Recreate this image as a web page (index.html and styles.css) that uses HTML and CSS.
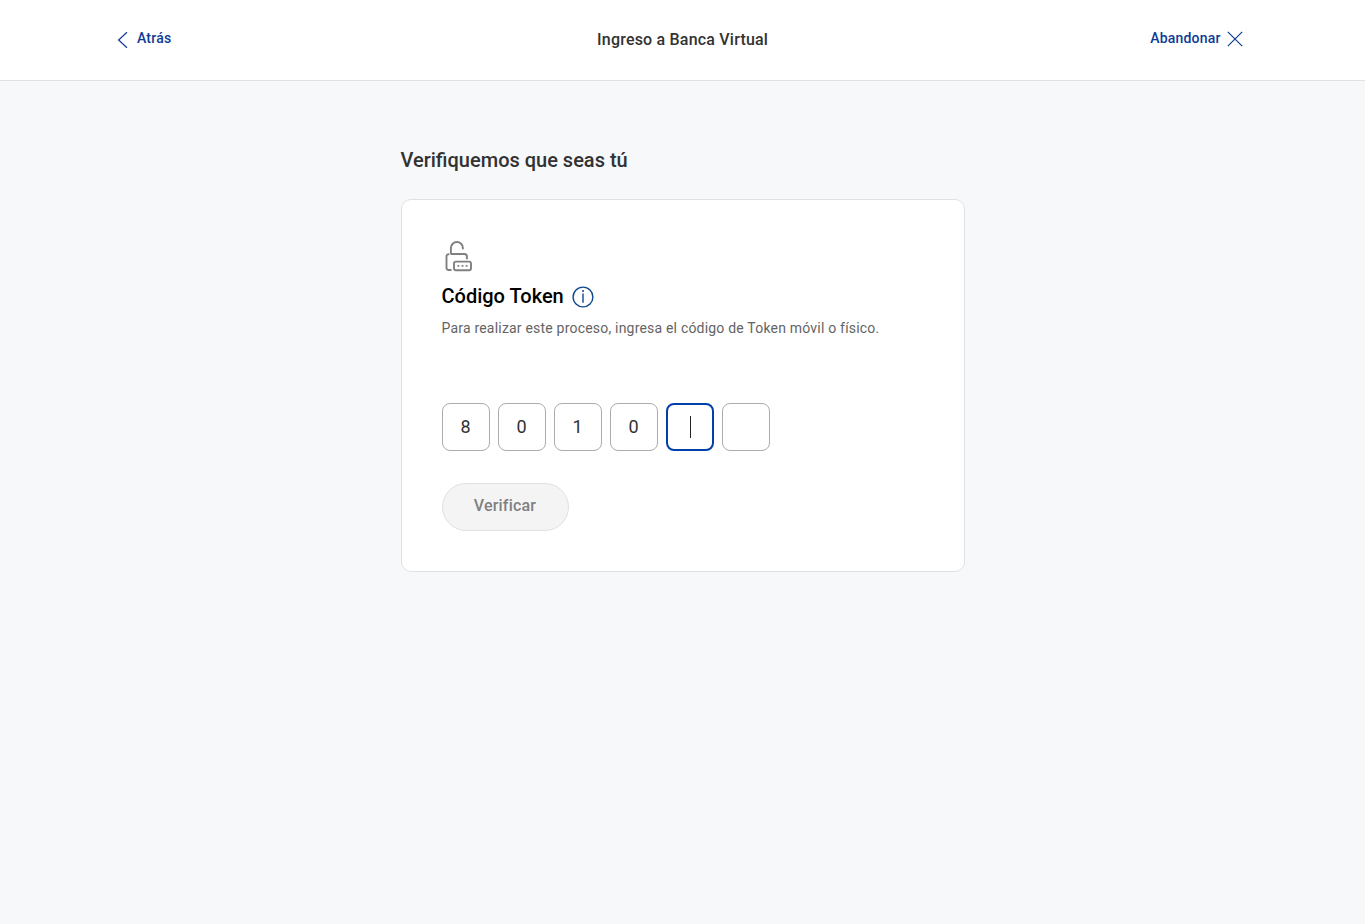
FILE: index.html
```html
<!DOCTYPE html>
<html lang="es">
<head>
<meta charset="utf-8">
<title>Ingreso a Banca Virtual</title>
<link rel="stylesheet" href="styles.css">
</head>
<body>
<header class="topbar">
  <a class="nav-link nav-back">
    <svg class="icon-back" width="12" height="18" viewBox="0 0 12 18"><path d="M10 1.2 1.6 9l8.4 7.8"/></svg>
    <span>Atrás</span>
  </a>
  <h1 class="topbar-title">Ingreso a Banca Virtual</h1>
  <a class="nav-link nav-exit">
    <span>Abandonar</span>
    <svg class="icon-close" width="16" height="16" viewBox="0 0 16 16"><path d="m.8.8 14.4 14.4M15.200.8.8 15.200"/></svg>
  </a>
</header>
<main class="content">
  <h2 class="heading">Verifiquemos que seas tú</h2>
  <section class="card">
    <svg class="icon-lock" width="32" height="32" viewBox="0 0 32 32">
      <path d="M8.900 13.500V8a6 6 0 0 1 12 0v.5M9.200 14h13.200a2.500 2.500 0 0 1 2.500 2.500V18.500M6.600 14.300A2.200 2.200 0 0 0 4.500 16.500v11.300a2.200 2.200 0 0 0 2.200 2.200H8.800"/>
      <rect x="12" y="21.600" width="17" height="8.600" rx="2"/>
      <path class="dots" d="M15.500 25.900h1.800M19.600 25.900h1.800M23.700 25.900h1.800"/>
    </svg>
    <div class="token-row">
      <h3 class="token-title">Código Token</h3>
      <svg class="icon-info" width="22" height="22" viewBox="0 0 22 22">
        <circle cx="11" cy="11" r="9.900"/><path d="M11 7.600v9.200"/><circle class="point" cx="11" cy="5.100" r="1"/>
      </svg>
    </div>
    <p class="token-text">Para realizar este proceso, ingresa el código de Token móvil o físico.</p>
    <div class="code">
      <div class="digit">8</div>
      <div class="digit">0</div>
      <div class="digit">1</div>
      <div class="digit">0</div>
      <div class="digit digit-active"><span class="caret"></span></div>
      <div class="digit"></div>
    </div>
    <button class="verify" disabled>Verificar</button>
  </section>
</main>
</body>
</html>
```
FILE: styles.css
```css
* { box-sizing: border-box; margin: 0; padding: 0; }
body {
  min-height: 100vh;
  background: #f7f8fa;
  color: #323232;
  font-family: Roboto, "Liberation Sans", sans-serif;
}
svg { display: block; fill: none; flex: none; }
.topbar {
  display: grid;
  grid-template-columns: 1fr auto 1fr;
  align-items: center;
  height: 81px;
  padding: 0 122px 0 117px;
  background: #fff;
  border-bottom: 1px solid #e1e1e1;
}
.nav-link {
  display: flex;
  align-items: center;
  color: #0f3b94;
  font-size: 14px;
  font-weight: 500;
  line-height: 20px;
  letter-spacing: 0.2px;
}
.nav-link span { margin-bottom: 4px; }
.nav-back { gap: 8px; }
.nav-exit { justify-self: end; gap: 6px; }
.icon-back, .icon-close { stroke: #0f3b94; stroke-width: 1.2; }
.icon-close { margin: 0 0.400px 2px 0; }
.topbar-title {
  margin: 0 -2.600px 1px 2.600px;
  font-size: 16px;
  font-weight: 500;
  line-height: 24px;
  letter-spacing: 0.2px;
}
.content { width: 564px; margin: 0 auto; padding-top: 65px; }
.heading { font-size: 20px; font-weight: 500; line-height: 28px; }
.card {
  height: 373px;
  margin-top: 25px;
  padding: 40px;
  background: #fff;
  border: 1px solid #e1e1e1;
  border-radius: 10px;
}
.icon-lock { stroke: #808080; stroke-width: 1.900; stroke-linecap: round; }
.icon-lock .dots { stroke-width: 1.800; stroke-linecap: butt; }
.token-row { display: flex; align-items: center; gap: 8px; height: 28px; margin-top: 10px; }
.token-title { color: #000; font-size: 20px; font-weight: 500; line-height: 28px; }
.icon-info { margin-top: 1px; stroke: #0f478f; stroke-width: 1.400; }
.icon-info .point { fill: #0f478f; stroke: none; }
.token-text {
  margin-top: 8px;
  color: #646464;
  font-size: 14px;
  line-height: 20px;
  letter-spacing: 0.2px;
}
.code { display: flex; gap: 8px; margin-top: 65px; }
.digit {
  display: flex;
  align-items: center;
  justify-content: center;
  width: 48px;
  height: 48px;
  padding-bottom: 2px;
  border: 1px solid #acacac;
  border-radius: 8px;
  font-size: 18px;
}
.digit-active { padding: 0; border: 2px solid #0040a8; }
.caret { width: 1px; height: 22px; margin-left: 1px; background: #222; }
.verify {
  display: block;
  width: 127px;
  height: 48px;
  margin-top: 32px;
  padding-bottom: 3px;
  background: #f4f4f4;
  border: 1px solid #e1e1e1;
  border-radius: 24px;
  color: #808080;
  font: 500 16px/24px Roboto, "Liberation Sans", sans-serif;
  letter-spacing: 0.2px;
}
```
